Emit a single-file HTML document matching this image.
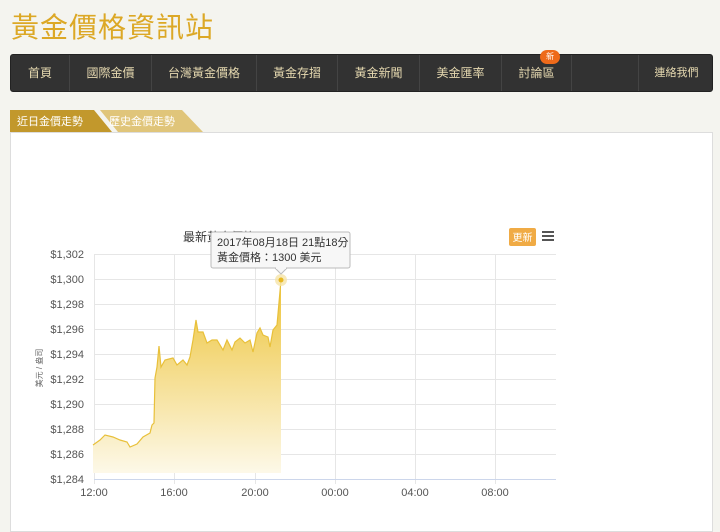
<!DOCTYPE html>
<html><head><meta charset="utf-8"><style>
*{margin:0;padding:0;box-sizing:border-box}
body{width:720px;height:514px;overflow:hidden;background:#f4f4ef;font-family:"Liberation Sans","Noto Sans CJK TC",sans-serif;position:relative}
.title{position:absolute;left:11px;top:6px;font-size:28px;color:#dca826;letter-spacing:1px}
.nav{position:absolute;left:10px;top:54px;width:703px;height:38px;background:#323232;border-radius:3px;border:1px solid #222}
.nav span{position:absolute;top:0;height:36px;line-height:36px;color:#e6d9b0;font-size:12px;text-align:center}
.div{position:absolute;top:0;width:1px;height:36px;background:#1e1e1e;border-right:1px solid #444}
.badge{position:absolute;left:540px;top:50px;width:20px;height:14px;background:#ee6a1a;border-radius:8px;color:#fff;font-size:8px;text-align:center;line-height:14px}
.panel{position:absolute;left:10px;top:132px;width:703px;height:400px;background:#fff;border:1px solid #ddd}
.tab{position:absolute;top:110px;height:22px;line-height:24px;color:#fff;font-size:11px;padding-left:7px}
</style></head><body>
<div class="title">黃金價格資訊站</div>
<div class="nav">
<span style="left:0;width:58px">首頁</span><div class="div" style="left:58px"></div>
<span style="left:59px;width:81px">國際金價</span><div class="div" style="left:140px"></div>
<span style="left:141px;width:104px">台灣黃金價格</span><div class="div" style="left:245px"></div>
<span style="left:246px;width:80px">黃金存摺</span><div class="div" style="left:326px"></div>
<span style="left:327px;width:81px">黃金新聞</span><div class="div" style="left:408px"></div>
<span style="left:409px;width:81px">美金匯率</span><div class="div" style="left:490px"></div>
<span style="left:491px;width:69px">討論區</span><div class="div" style="left:560px"></div>
<div class="div" style="left:627px"></div>
<span style="left:628px;width:75px;font-size:11px">連絡我們</span>
</div>
<div class="badge">新</div>
<svg style="position:absolute;left:0;top:110px" width="220" height="23"><polygon points="100,0 182,0 203,22 118,22" fill="#e0c57a"/><polygon points="10,0 94,0 112,22 10,22" fill="#c2982c"/></svg>
<div class="tab" style="left:10px">近日金價走勢</div>
<div class="tab" style="left:103px;padding-left:6px">歷史金價走勢</div>
<div class="panel"></div>
<svg style="position:absolute;left:0;top:0" width="720" height="514">
<defs><linearGradient id="g" gradientUnits="userSpaceOnUse" x1="0" y1="300" x2="0" y2="475"><stop offset="0" stop-color="#efc94a"/><stop offset="1" stop-color="#fdf9ea"/></linearGradient></defs>
<g stroke="#e6e6e6" stroke-width="1">
<line x1="94" y1="254.5" x2="556" y2="254.5"/><line x1="94" y1="279.5" x2="556" y2="279.5"/><line x1="94" y1="304.5" x2="556" y2="304.5"/><line x1="94" y1="329.5" x2="556" y2="329.5"/><line x1="94" y1="354.5" x2="556" y2="354.5"/><line x1="94" y1="379.5" x2="556" y2="379.5"/><line x1="94" y1="404.5" x2="556" y2="404.5"/><line x1="94" y1="429.5" x2="556" y2="429.5"/><line x1="94" y1="454.5" x2="556" y2="454.5"/>
<line x1="94.5" y1="254" x2="94.5" y2="484"/><line x1="174.5" y1="254" x2="174.5" y2="484"/><line x1="255.5" y1="254" x2="255.5" y2="484"/><line x1="335.5" y1="254" x2="335.5" y2="484"/><line x1="415.5" y1="254" x2="415.5" y2="484"/><line x1="495.5" y1="254" x2="495.5" y2="484"/>
</g>
<line x1="94" y1="479.5" x2="556" y2="479.5" stroke="#ccd6eb"/>
<path d="M93,445 L100,440 L105,435 L113,437 L120,440 L127,442 L130,447 L137,444 L143,437 L150,433 L152,425 L154,423 L155,378 L157,367 L159,346 L161,367 L165,360 L173,358 L177,365 L183,360 L187,365 L190,357 L193,340 L196,320 L198,332 L203,332 L207,343 L212,340 L217,340 L223,350 L227,340 L232,350 L235,342 L240,338 L245,343 L250,340 L253,352 L257,333 L260,328 L263,335 L268,337 L270,347 L273,330 L277,325 L281,280 L281,473 L93,473 Z" fill="url(#g)"/>
<path d="M93,445 L100,440 L105,435 L113,437 L120,440 L127,442 L130,447 L137,444 L143,437 L150,433 L152,425 L154,423 L155,378 L157,367 L159,346 L161,367 L165,360 L173,358 L177,365 L183,360 L187,365 L190,357 L193,340 L196,320 L198,332 L203,332 L207,343 L212,340 L217,340 L223,350 L227,340 L232,350 L235,342 L240,338 L245,343 L250,340 L253,352 L257,333 L260,328 L263,335 L268,337 L270,347 L273,330 L277,325 L281,280" fill="none" stroke="#e8c03a" stroke-width="1.2"/>
<circle cx="281" cy="280" r="6" fill="#f5e4a8" opacity=".8"/><circle cx="281" cy="280" r="2.5" fill="#e8b820"/>
<g font-size="11" fill="#555" text-anchor="end" font-family="Liberation Sans,sans-serif">
<text x="84" y="258">$1,302</text><text x="84" y="283">$1,300</text><text x="84" y="308">$1,298</text><text x="84" y="333">$1,296</text><text x="84" y="358">$1,294</text><text x="84" y="383">$1,292</text><text x="84" y="408">$1,290</text><text x="84" y="433">$1,288</text><text x="84" y="458">$1,286</text><text x="84" y="483">$1,284</text>
</g>
<g font-size="11" fill="#555" text-anchor="middle" font-family="Liberation Sans,sans-serif">
<text x="94" y="496">12:00</text><text x="174" y="496">16:00</text><text x="255" y="496">20:00</text><text x="335" y="496">00:00</text><text x="415" y="496">04:00</text><text x="495" y="496">08:00</text>
</g>
<text transform="translate(42,368) rotate(-90)" font-size="8" fill="#666" text-anchor="middle">美元 / 盎司</text>
<text x="183" y="241" font-size="12" fill="#333">最新黃金價格：1299.60 <tspan fill="#e33">▲12.1</tspan></text>
<rect x="211" y="232" width="139" height="36" fill="#f7f7f7" stroke="#bbb" rx="2"/>
<polygon points="275,268 287,268 281,274" fill="#f7f7f7" stroke="#bbb"/><line x1="276" y1="268" x2="286" y2="268" stroke="#f7f7f7" stroke-width="2"/>
<text x="217" y="246" font-size="11" fill="#333">2017年08月18日 21點18分</text>
<text x="217" y="261" font-size="11" fill="#333">黃金價格：1300 美元</text>
<rect x="509" y="228" width="27" height="18" rx="2" fill="#f0ab45"/>
<text x="522.5" y="241" font-size="10" fill="#fff" text-anchor="middle">更新</text>
<g fill="#555"><rect x="542" y="231" width="12" height="2"/><rect x="542" y="235" width="12" height="2"/><rect x="542" y="239" width="12" height="2"/></g>
</svg>
</body></html>
